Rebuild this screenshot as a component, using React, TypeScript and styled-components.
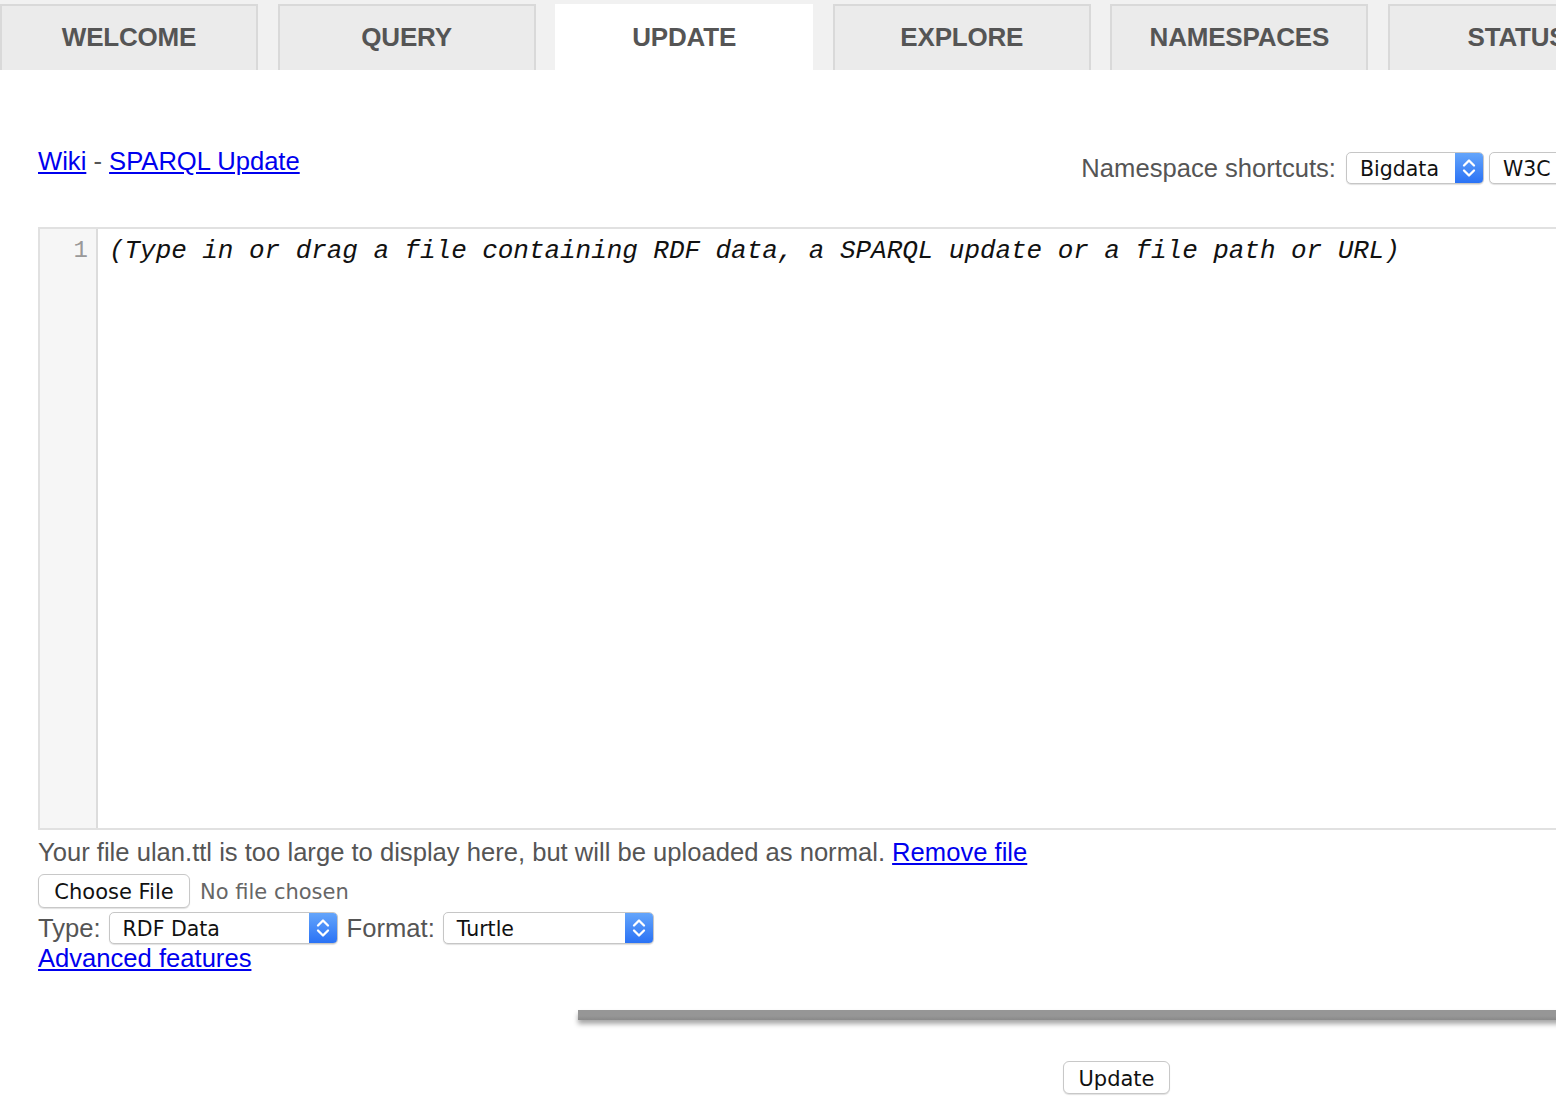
import React from "react";
import styled, { createGlobalStyle } from "styled-components";

const GlobalStyle = createGlobalStyle`
  html, body { margin: 0; padding: 0; background: #fff; overflow: hidden; }
  body { font-family: "Liberation Sans", Arial, sans-serif; color: #555; }
`;

const Page = styled.div`
  width: 1556px;
  height: 1114px;
  overflow: hidden;
`;

const TabBar = styled.nav`
  display: flex;
  gap: 19.6px;
  height: 70px;
  padding-top: 4px;
  box-sizing: border-box;
  background: #f1f1f1;
  overflow: hidden;
`;

const Tab = styled.div<{ $active?: boolean }>`
  flex: 0 0 258px;
  box-sizing: border-box;
  height: 66px;
  padding-bottom: 2px;
  display: flex;
  align-items: center;
  justify-content: center;
  background: ${(p) => (p.$active ? "#fff" : "#ebebeb")};
  border: 2px solid ${(p) => (p.$active ? "#fff" : "#d9d9d9")};
  border-bottom: none;
  font: bold 26px "Liberation Sans", Arial, sans-serif;
  color: #555;
  letter-spacing: -0.2px;
`;

const Main = styled.main`
  padding: 0 38px;
`;

const HeaderRow = styled.div`
  display: flex;
  justify-content: space-between;
  align-items: flex-start;
  width: 1561px;
  margin-top: 76px;
`;

const Links = styled.div`
  font-size: 25.6px;
  line-height: 30px;
  color: #555;
`;

const Link = styled.a`
  color: #0000ee;
  text-decoration: underline;
  cursor: pointer;
`;

const Shortcuts = styled.div`
  display: flex;
  align-items: center;
  gap: 5px;
  padding-top: 6px;
`;

const Label = styled.span<{ $gap?: number; $lead?: number }>`
  font-size: 25.6px;
  line-height: 30px;
  color: #555;
  margin-left: ${(p) => p.$lead ?? 0}px;
  margin-right: ${(p) => p.$gap ?? 8}px;
`;

const SelectBox = styled.div<{ $w: number }>`
  width: ${(p) => p.$w}px;
  height: 32px;
  box-sizing: border-box;
  display: flex;
  align-items: stretch;
  background: #fff;
  border: 1px solid #c6c6c6;
  border-radius: 5px;
  box-shadow: 0 1px 1px rgba(0, 0, 0, 0.12);
  font: 20.5px "DejaVu Sans", "Liberation Sans", sans-serif;
  color: #111;
  overflow: hidden;
  flex-shrink: 0;
`;

const SelectText = styled.span`
  flex: 1;
  display: flex;
  align-items: center;
  padding: 1px 0 0 13px;
  white-space: nowrap;
`;

const Stepper = styled.span`
  width: 28px;
  display: flex;
  align-items: center;
  justify-content: center;
  background: linear-gradient(#64a5fb, #2a72f5);
`;

const Editor = styled.div`
  display: flex;
  width: 1700px;
  height: 603px;
  margin-top: 43px;
  box-sizing: border-box;
  border: 2px solid #e1e1e1;
`;

const Gutter = styled.div`
  width: 58px;
  box-sizing: border-box;
  background: #f6f6f6;
  border-right: 2px solid #dcdcdc;
  padding: 7px 8px 0 0;
  text-align: right;
  font: 24px "Liberation Mono", "Courier New", monospace;
  line-height: 30px;
  color: #999;
`;

const Code = styled.div`
  flex: 1;
  padding: 7px 0 0 11px;
  font: italic 26px "Liberation Mono", "Courier New", monospace;
  line-height: 30px;
  color: #111;
  white-space: pre;
  letter-spacing: -0.05px;
`;

const Message = styled.p`
  margin: 7px 0 0;
  font-size: 25.6px;
  line-height: 30px;
  color: #555;
`;

const FileRow = styled.div`
  display: flex;
  align-items: center;
  gap: 10px;
  margin-top: 7px;
`;

const PushButton = styled.button<{ $w: number }>`
  width: ${(p) => p.$w}px;
  height: 34px;
  box-sizing: border-box;
  padding: 2px 0 0;
  background: #fff;
  border: 1px solid #c8c8c8;
  border-radius: 6px;
  box-shadow: 0 1px 1px rgba(0, 0, 0, 0.12);
  font: 21px "DejaVu Sans", "Liberation Sans", sans-serif;
  color: #111;
`;

const Hint = styled.span`
  font: 21px "DejaVu Sans", "Liberation Sans", sans-serif;
  color: #666;
  padding-top: 2px;
`;

const TypeRow = styled.div`
  display: flex;
  align-items: center;
  margin-top: 4px;
  height: 32px;
`;

const Advanced = styled.div`
  font-size: 25.6px;
  line-height: 28px;
`;

const Footer = styled.div`
  display: flex;
  flex-direction: column;
  align-items: center;
  width: 1077px;
  margin: 38px 0 0 540px;
`;

const Bar = styled.div`
  align-self: stretch;
  height: 10px;
  background: linear-gradient(#969696 60%, #898989);
  box-shadow: 0 4px 5px rgba(0, 0, 0, 0.35);
`;

const UpdateButton = styled(PushButton)`
  height: 33px;
  margin-top: 41px;
`;

const Chevrons = () => (
  <svg width="14" height="24" viewBox="0 0 14 24" fill="none">
    <path d="M2 9.5 L7 4.5 L12 9.5" stroke="#fff" strokeWidth="2.3" strokeLinecap="round" strokeLinejoin="round" />
    <path d="M2 14.5 L7 19.5 L12 14.5" stroke="#fff" strokeWidth="2.3" strokeLinecap="round" strokeLinejoin="round" />
  </svg>
);

const Select = ({ value, width, stepper = true }: { value: string; width: number; stepper?: boolean }) => (
  <SelectBox $w={width}>
    <SelectText>{value}</SelectText>
    {stepper && (
      <Stepper>
        <Chevrons />
      </Stepper>
    )}
  </SelectBox>
);

const tabs = ["WELCOME", "QUERY", "UPDATE", "EXPLORE", "NAMESPACES", "STATUS"];

export default function App() {
  return (
    <Page>
      <GlobalStyle />
      <TabBar>
        {tabs.map((t) => (
          <Tab key={t} $active={t === "UPDATE"}>
            {t}
          </Tab>
        ))}
      </TabBar>
      <Main>
        <HeaderRow>
          <Links>
            <Link>Wiki</Link> - <Link>SPARQL Update</Link>
          </Links>
          <Shortcuts>
            <Label $gap={5}>Namespace shortcuts:</Label>
            <Select value="Bigdata" width={138} />
            <Select value="W3C" width={110} />
          </Shortcuts>
        </HeaderRow>
        <Editor>
          <Gutter>1</Gutter>
          <Code>(Type in or drag a file containing RDF data, a SPARQL update or a file path or URL)</Code>
        </Editor>
        <Message>
          Your file ulan.ttl is too large to display here, but will be uploaded as normal. <Link>Remove file</Link>
        </Message>
        <FileRow>
          <PushButton $w={152}>Choose File</PushButton>
          <Hint>No file chosen</Hint>
        </FileRow>
        <TypeRow>
          <Label>Type:</Label>
          <Select value="RDF Data" width={229} />
          <Label $lead={9} $gap={8}>Format:</Label>
          <Select value="Turtle" width={211} />
        </TypeRow>
        <Advanced>
          <Link>Advanced features</Link>
        </Advanced>
        <Footer>
          <Bar />
          <UpdateButton $w={107}>Update</UpdateButton>
        </Footer>
      </Main>
    </Page>
  );
}
